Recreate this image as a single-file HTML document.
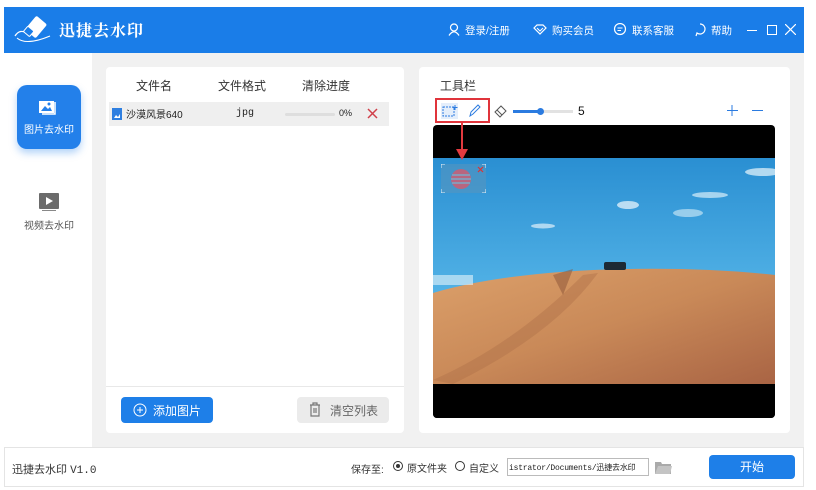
<!DOCTYPE html>
<html><head><meta charset="utf-8"><style>
*{margin:0;padding:0;box-sizing:border-box}
body{width:816px;height:490px;background:#fff;font-family:"Liberation Sans","Noto Sans CJK SC",sans-serif;position:relative;overflow:hidden;font-size:11px;color:#333}
.abs{position:absolute}
#hdr{left:4px;top:7px;width:800px;height:46px;background:#1a7de8}
#body{left:4px;top:53px;width:800px;height:394px;background:#f1f1f1}
#side{left:4px;top:53px;width:88px;height:394px;background:#fff}
.panel{background:#fff;border-radius:4px}
#foot{left:4px;top:447px;width:800px;height:40px;background:#fff;border:1px solid #e4e4e4}
.nav{color:#fff;font-size:10.5px;top:23px}
</style></head><body>
<div id="hdr" class="abs"></div>
<svg class="abs" style="left:12px;top:14px" width="40" height="32" viewBox="0 0 40 32">
<path d="M3 22 Q8 14 16 20" stroke="#fff" fill="none" stroke-width="1.2"/>
<path d="M5 24 Q14 32 38 22" stroke="#fff" fill="none" stroke-width="1"/>
<rect x="17" y="4" width="14" height="18" rx="2" transform="rotate(40 24 13)" fill="#fff"/>
<rect x="13" y="14" width="8" height="7" rx="1" transform="rotate(40 17 17)" fill="#1a7de8" stroke="#fff"/>
</svg>
<div class="abs" style="left:59px;top:18px;color:#fff;font-size:16px;font-family:'Noto Serif CJK SC',serif;font-weight:bold;letter-spacing:1px">迅捷去水印</div>
<svg class="abs" style="left:448px;top:23px" width="12" height="13" viewBox="0 0 12 13"><circle cx="6" cy="4.5" r="3.5" stroke="#fff" fill="none" stroke-width="1.2"/><path d="M1 12.5 Q6 5 11 12.5" stroke="#fff" fill="none" stroke-width="1.2"/></svg>
<div class="abs nav" style="left:465px">登录/注册</div>
<svg class="abs" style="left:533px;top:24px" width="14" height="11" viewBox="0 0 14 11"><path d="M1 4 L4 1 H10 L13 4 L7 10 Z" stroke="#fff" fill="none" stroke-width="1.2"/><path d="M4 4 L7 7 L10 4" stroke="#fff" fill="none"/></svg>
<div class="abs nav" style="left:552px">购买会员</div>
<svg class="abs" style="left:613px;top:23px" width="14" height="13" viewBox="0 0 14 13"><circle cx="7" cy="6" r="5.5" stroke="#fff" fill="none" stroke-width="1.2"/><path d="M4.5 5H9.5M4.5 7.5H8" stroke="#fff"/></svg>
<div class="abs nav" style="left:632px">联系客服</div>
<svg class="abs" style="left:694px;top:23px" width="12" height="14" viewBox="0 0 12 14"><path d="M6 1 A5 5 0 1 1 3 10 L2 13" stroke="#fff" fill="none" stroke-width="1.2"/></svg>
<div class="abs nav" style="left:711px">帮助</div>
<div class="abs" style="left:747px;top:30px;width:10px;height:1px;background:#fff"></div>
<div class="abs" style="left:767px;top:25px;width:10px;height:10px;border:1px solid #fff"></div>
<svg class="abs" style="left:785px;top:24px" width="11" height="11"><path d="M0 0L11 11M11 0L0 11" stroke="#fff" stroke-width="1.2"/></svg>

<div id="body" class="abs"></div>
<div id="side" class="abs"></div>
<div class="abs" style="left:17px;top:85px;width:64px;height:64px;background:#2380ea;border-radius:10px;box-shadow:0 4px 8px rgba(35,128,234,.35)"></div>
<svg class="abs" style="left:38px;top:99px" width="20" height="16" viewBox="0 0 20 16"><rect x="1" y="2" width="15" height="12" fill="#fff"/><path d="M17 3 V15 H4" stroke="#fff" stroke-width="1.5" fill="none"/><path d="M3 12 L7 7 L10 10 L12 8 L14 12Z" fill="#2380ea"/><circle cx="11" cy="5" r="1.5" fill="#2380ea"/></svg>
<div class="abs" style="left:24px;top:121px;color:#fff;font-size:10px">图片去水印</div>
<svg class="abs" style="left:39px;top:193px" width="20" height="18" viewBox="0 0 20 18"><rect x="0" y="0" width="20" height="16" rx="1" fill="#6b6b6b"/><path d="M7 4 L14 8 L7 12Z" fill="#fff"/><rect x="3" y="17" width="14" height="1" fill="#888"/></svg>
<div class="abs" style="left:24px;top:217px;color:#555;font-size:10px">视频去水印</div>

<div class="abs panel" style="left:106px;top:67px;width:298px;height:366px"></div>
<div class="abs" style="left:136px;top:77px;font-size:12px;color:#333">文件名</div>
<div class="abs" style="left:218px;top:77px;font-size:12px;color:#333">文件格式</div>
<div class="abs" style="left:302px;top:77px;font-size:12px;color:#333">清除进度</div>
<div class="abs" style="left:109px;top:102px;width:280px;height:24px;background:#efefef"></div>
<svg class="abs" style="left:112px;top:108px" width="10" height="12"><rect width="10" height="12" fill="#2f7fe0"/><path d="M2 10 L4 7 L6 9 L8 6 V10Z" fill="#fff"/></svg>
<div class="abs" style="left:126px;top:106px;font-size:10px;color:#222">沙漠风景640</div>
<div class="abs" style="left:236px;top:108px;font-size:10px;color:#222;font-family:'Liberation Mono',monospace">jpg</div>
<div class="abs" style="left:285px;top:113px;width:50px;height:3px;background:#dedede;border-radius:2px"></div>
<div class="abs" style="left:339px;top:108px;font-size:9px;color:#222">0%</div>
<svg class="abs" style="left:367px;top:108px" width="11" height="11"><path d="M1 1L10 10M10 1L1 10" stroke="#d0404a" stroke-width="1.5"/></svg>
<div class="abs" style="left:106px;top:386px;width:298px;height:1px;background:#e8e8e8"></div>
<div class="abs" style="left:121px;top:397px;width:92px;height:26px;background:#1e7fe8;border-radius:4px"></div>
<svg class="abs" style="left:133px;top:403px" width="14" height="14"><circle cx="7" cy="7" r="6" stroke="#fff" fill="none"/><path d="M7 4V10M4 7H10" stroke="#fff"/></svg>
<div class="abs" style="left:153px;top:402px;color:#fff;font-size:12px">添加图片</div>
<div class="abs" style="left:297px;top:397px;width:92px;height:26px;background:#ebebeb;border-radius:4px"></div>
<svg class="abs" style="left:309px;top:402px" width="12" height="15"><path d="M1 3H11M4 3V1H8V3M2 3V14H10V3M5 6V11M7 6V11" stroke="#777" fill="none" stroke-width="1.2"/></svg>
<div class="abs" style="left:330px;top:402px;color:#666;font-size:12px">清空列表</div>

<div class="abs panel" style="left:419px;top:67px;width:371px;height:366px"></div>
<div class="abs" style="left:440px;top:77px;font-size:12px;color:#333">工具栏</div>
<div class="abs" style="left:435px;top:98px;width:55px;height:25px;border:2px solid #e0343b"></div>
<div class="abs" style="left:441px;top:103px;width:17px;height:16px;background:#e4eefb"></div>
<svg class="abs" style="left:442px;top:104px" width="16" height="14"><rect x="1" y="3" width="11" height="9" stroke="#2b7be0" fill="none" stroke-dasharray="2 1"/><path d="M13 1V6M10.5 3.5H15.5" stroke="#2b7be0"/></svg>
<svg class="abs" style="left:468px;top:103px" width="14" height="15"><path d="M2 13 L3 9 L10 2 L12 4 L5 11Z" stroke="#2b7be0" fill="none"/></svg>
<svg class="abs" style="left:493px;top:104px" width="15" height="14"><path d="M2 8 L8 2 L13 7 L7 13Z" stroke="#555" fill="none"/><path d="M4 6 L9 11" stroke="#555"/></svg>
<div class="abs" style="left:513px;top:110px;width:27px;height:3px;background:#2b7be0"></div>
<div class="abs" style="left:540px;top:110px;width:33px;height:3px;background:#e2e2e2"></div>
<div class="abs" style="left:537px;top:108px;width:7px;height:7px;border-radius:50%;background:#2b7be0"></div>
<div class="abs" style="left:578px;top:104px;font-size:12px;color:#111">5</div>
<svg class="abs" style="left:727px;top:105px" width="40" height="11"><path d="M5 0V11M0 5.5H11" stroke="#2b7be0"/><path d="M25 5.5H36" stroke="#2b7be0"/></svg>

<svg class="abs" style="left:433px;top:125px" width="342" height="293" viewBox="0 0 342 293">
<defs>
<linearGradient id="sky" x1="0" y1="0" x2="0" y2="1"><stop offset="0" stop-color="#2a8fd2"/><stop offset=".6" stop-color="#52b2e6"/><stop offset="1" stop-color="#86d3f2"/></linearGradient>
<linearGradient id="sand" x1="0" y1="0" x2="1" y2="1"><stop offset="0" stop-color="#dca06a"/><stop offset=".5" stop-color="#c98958"/><stop offset="1" stop-color="#a96444"/></linearGradient>
<clipPath id="c"><rect width="342" height="293" rx="4"/></clipPath>
</defs>
<g clip-path="url(#c)">
<rect width="342" height="293" fill="#000"/>
<rect y="33" width="342" height="226" fill="url(#sky)"/>
<ellipse cx="195" cy="80" rx="11" ry="4" fill="#e5f3fb" opacity=".75"/>
<ellipse cx="277" cy="70" rx="18" ry="3" fill="#d8eef9" opacity=".7"/>
<ellipse cx="255" cy="88" rx="15" ry="4" fill="#d8eef9" opacity=".6"/>
<ellipse cx="330" cy="47" rx="18" ry="4" fill="#e0f0fa" opacity=".75"/>
<ellipse cx="110" cy="101" rx="12" ry="2.5" fill="#e0f0fa" opacity=".7"/>
<path d="M0 168 Q60 150 160 145 Q260 141 342 150 V259 H0Z" fill="url(#sand)"/>
<path d="M0 255 Q80 220 150 150 L165 148 Q120 210 20 259Z" fill="#b0704a" opacity=".45"/>
<path d="M120 150 L140 144 L130 170Z" fill="#8a5235" opacity=".5"/>
<rect x="171" y="137" width="22" height="8" rx="2" fill="#1d2a35"/>
<rect x="0" y="150" width="40" height="10" fill="#e6f3fa" opacity=".6"/>
<rect y="259" width="342" height="34" fill="#000"/>
</g>
</svg>
<div class="abs" style="left:441px;top:164px;width:45px;height:29px;background:rgba(90,150,190,.55)"></div>
<svg class="abs" style="left:441px;top:164px" width="45" height="29"><path d="M0 4V0H4M41 0H45V4M0 25V29H4M41 29H45V25" stroke="#e8f2f8" fill="none"/><circle cx="20" cy="15" r="10" fill="#d45a6e" opacity=".8"/><path d="M11 11H29M10 15H30M11 19H29" stroke="#7aa9c8" stroke-width="1.4"/><path d="M37 3L42 8M42 3L37 8" stroke="#d33" stroke-width="1.2"/></svg>
<svg class="abs" style="left:455px;top:123px" width="14" height="38"><path d="M7 0V30" stroke="#e33a3f" stroke-width="2"/><path d="M1 26L7 37L13 26Z" fill="#e33a3f"/></svg>

<div id="foot" class="abs"></div>
<div class="abs" style="left:12px;top:461px;font-size:11px;color:#333">迅捷去水印 <span style="font-family:'Liberation Mono',monospace">V1.0</span></div>
<div class="abs" style="left:351px;top:461px;font-size:10px;color:#333">保存至:</div>
<div class="abs" style="left:393px;top:461px;width:10px;height:10px;border:1px solid #333;border-radius:50%"></div>
<div class="abs" style="left:396px;top:464px;width:4px;height:4px;background:#333;border-radius:50%"></div>
<div class="abs" style="left:407px;top:460px;font-size:10px;color:#333">原文件夹</div>
<div class="abs" style="left:455px;top:461px;width:10px;height:10px;border:1px solid #333;border-radius:50%"></div>
<div class="abs" style="left:469px;top:460px;font-size:10px;color:#333">自定义</div>
<div class="abs" style="left:507px;top:458px;width:142px;height:18px;border:1px solid #bbb;overflow:hidden;white-space:nowrap;font-size:8px;padding:3px 1px;font-family:'Liberation Mono','Noto Sans CJK SC',monospace;color:#222;letter-spacing:-0.2px">istrator/Documents/迅捷去水印</div>
<svg class="abs" style="left:654px;top:460px" width="18" height="15"><path d="M1 2H7L8 4H17V14H1Z" fill="#aaa"/><path d="M1 14L4 6H18L16 14Z" fill="#c4c4c4"/></svg>
<div class="abs" style="left:709px;top:455px;width:86px;height:24px;background:#1e7fe8;border-radius:4px;color:#fff;font-size:12px;text-align:center;line-height:24px">开始</div>
</body></html>
